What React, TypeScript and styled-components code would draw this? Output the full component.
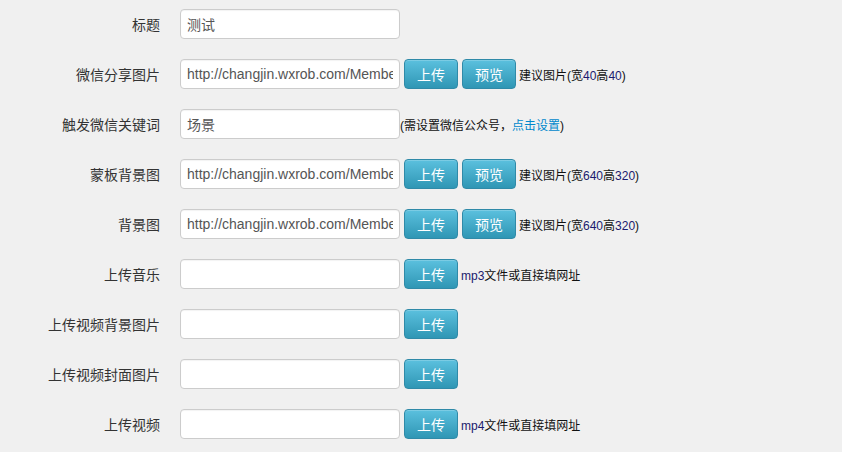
import React from "react";
import styled, { createGlobalStyle } from "styled-components";

const Global = createGlobalStyle`
  html, body { margin: 0; padding: 0; background: #f0f0f0; }
  body { font-family: "Liberation Sans", Arial, "Noto Sans CJK SC", sans-serif; color: #333; }
`;

const Form = styled.div`
  padding-top: 9px;
  display: flex;
  flex-direction: column;
  gap: 20px;
`;

const Row = styled.div`
  display: flex;
  align-items: center;
  height: 30px;
`;

const Label = styled.label`
  width: 160px;
  margin-right: 20px;
  text-align: right;
  font-size: 14px;
  color: #333;
  font-family: "Noto Sans CJK SC", sans-serif;
`;

const Input = styled.input`
  box-sizing: border-box;
  width: 220px;
  height: 30px;
  padding: 4px 6px;
  border: 1px solid #cccccc;
  border-radius: 4px;
  background: #fff;
  font-size: 14px;
  color: #555;
  font-family: "Liberation Sans", Arial, "Noto Sans CJK SC", sans-serif;
  outline: none;
  box-shadow: inset 0 1px 1px rgba(0, 0, 0, 0.05);
`;

const Button = styled.button`
  box-sizing: border-box;
  width: 54px;
  height: 30px;
  margin-left: 4px;
  padding: 0;
  border: 1px solid #2f8aa8;
  border-radius: 4px;
  background: linear-gradient(to bottom, #5bc0de, #2f96b4);
  color: #fff;
  font-size: 14px;
  font-family: "Noto Sans CJK SC", sans-serif;
  box-shadow: inset 0 1px 0 rgba(255, 255, 255, 0.2);
  cursor: pointer;
`;

const Help = styled.span<{ $gap?: number }>`
  margin-left: ${(p) => p.$gap ?? 3}px;
  font-size: 12px;
  color: #111;
  font-family: "Liberation Sans", Arial, "Noto Sans CJK SC", sans-serif;
  white-space: nowrap;
`;

const Num = styled.span`
  color: #1a1a6e;
`;

const Link = styled.a`
  color: #0088cc;
  text-decoration: none;
`;

const URL = "http://changjin.wxrob.com/Member/Upload/scene.jpg";

export default function App() {
  return (
    <>
      <Global />
      <Form>
        <Row>
          <Label>标题</Label>
          <Input defaultValue="测试" />
        </Row>
        <Row>
          <Label>微信分享图片</Label>
          <Input defaultValue={URL} />
          <Button>上传</Button>
          <Button>预览</Button>
          <Help>
            建议图片(宽<Num>40</Num>高<Num>40</Num>)
          </Help>
        </Row>
        <Row>
          <Label>触发微信关键词</Label>
          <Input defaultValue="场景" />
          <Help $gap={0}>
            (需设置微信公众号，<Link href="#">点击设置</Link>)
          </Help>
        </Row>
        <Row>
          <Label>蒙板背景图</Label>
          <Input defaultValue={URL} />
          <Button>上传</Button>
          <Button>预览</Button>
          <Help>
            建议图片(宽<Num>640</Num>高<Num>320</Num>)
          </Help>
        </Row>
        <Row>
          <Label>背景图</Label>
          <Input defaultValue={URL} />
          <Button>上传</Button>
          <Button>预览</Button>
          <Help>
            建议图片(宽<Num>640</Num>高<Num>320</Num>)
          </Help>
        </Row>
        <Row>
          <Label>上传音乐</Label>
          <Input />
          <Button>上传</Button>
          <Help>
            <Num>mp3</Num>文件或直接填网址
          </Help>
        </Row>
        <Row>
          <Label>上传视频背景图片</Label>
          <Input />
          <Button>上传</Button>
        </Row>
        <Row>
          <Label>上传视频封面图片</Label>
          <Input />
          <Button>上传</Button>
        </Row>
        <Row>
          <Label>上传视频</Label>
          <Input />
          <Button>上传</Button>
          <Help>
            <Num>mp4</Num>文件或直接填网址
          </Help>
        </Row>
      </Form>
    </>
  );
}
